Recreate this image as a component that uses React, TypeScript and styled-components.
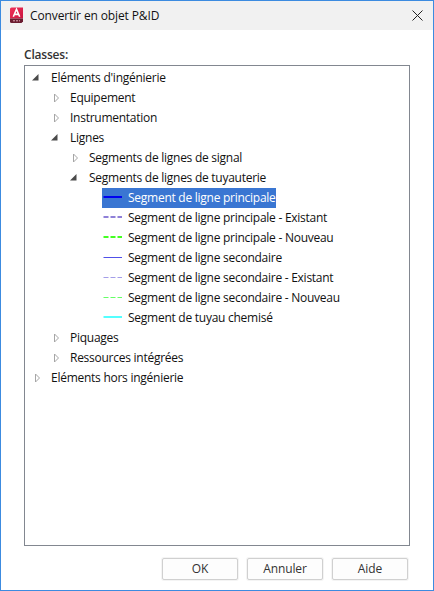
import React from 'react';
import styled, { createGlobalStyle } from 'styled-components';

const GlobalStyle = createGlobalStyle`
  html, body {
    margin: 0;
    padding: 0;
    background: #fff;
  }
  * {
    box-sizing: border-box;
  }
`;

const Window = styled.div`
  width: 434px;
  height: 591px;
  display: flex;
  flex-direction: column;
  border: solid 1px #3c8be0;
  background: #fff;
  font-family: 'Open Sans', 'Noto Sans', sans-serif;
  font-size: 12px;
  color: #111;
  overflow: hidden;
`;

const TitleBar = styled.div`
  height: 29px;
  flex: none;
  display: flex;
  align-items: center;
  padding: 0 10px 0 8px;
  background: #f1f1f1;
`;

const TitleText = styled.span`
  margin-left: 6px;
  flex: 1;
  letter-spacing: -0.12px;
`;

const Body = styled.div`
  flex: 1;
  display: flex;
  flex-direction: column;
  padding: 17px 23px 0;
`;

const Label = styled.div`
  height: 18px;
  line-height: 16px;
  font-weight: 600;
  letter-spacing: -0.2px;
  color: #333;
`;

const TreeBox = styled.div`
  width: 386px;
  height: 481px;
  border: solid 1px #828790;
  padding: 2px 0 0;
`;

const List = styled.ul`
  list-style: none;
  margin: 0;
  padding: 0;
`;

const Row = styled.li<{ $indent: number }>`
  height: 20px;
  display: flex;
  align-items: center;
  padding-left: ${(props) => props.$indent}px;
`;

const ArrowSlot = styled.span`
  width: 20px;
  flex: none;
  display: flex;
  align-items: center;
`;

const RowText = styled.span<{ $selected?: boolean }>`
  height: 20px;
  line-height: 19px;
  white-space: nowrap;
  letter-spacing: -0.26px;
  ${(props) =>
    props.$selected &&
    `
    color: #fff;
    background: #3a76d2;
  `}
`;

const LeafLine = styled.span<{ $selected?: boolean }>`
  display: flex;
  align-items: center;
  height: 20px;
  margin-left: -1px;
  padding-left: 1px;
  background: ${(props) => (props.$selected ? '#3a76d2' : 'transparent')};
`;

const Swatch = styled.svg`
  width: 24px;
  height: 20px;
  flex: none;
  margin-right: 1px;
`;

const Footer = styled.div`
  display: flex;
  justify-content: flex-end;
  gap: 9px;
  padding: 12px 2px 0 0;
`;

const Button = styled.button`
  width: 76px;
  height: 22px;
  padding: 0 0 2px;
  border: solid 1px #d0d0d0;
  border-radius: 2px;
  background: #fdfdfd;
  box-shadow: 0 0 0 1px #f4f4f4;
  font: inherit;
  color: #333;
  letter-spacing: -0.1px;
`;

const AppIcon = () => (
  <svg width="15" height="17" viewBox="0 0 15 17">
    <defs>
      <linearGradient id="appIconFill" x1="0" y1="0" x2="1" y2="1">
        <stop offset="0" stopColor="#f0325a" />
        <stop offset="1" stopColor="#c9143f" />
      </linearGradient>
    </defs>
    <path d="M2.5 0.5 H14 V11.5 H1 V2 Q1 0.5 2.5 0.5 Z" fill="url(#appIconFill)" />
    <path d="M1 11.5 H14 V14.5 L12.5 16 H2.5 Q1 16 1 14.5 Z" fill="#6a1c30" />
    <path d="M4.3 9.8 L7.5 2.3 L10.7 9.8 M5.6 7.4 H9.4" fill="none" stroke="#fff" strokeWidth="1.6" />
    <path d="M4 13.8 H11" stroke="#e0a8b4" strokeWidth="1" strokeDasharray="2 1" />
  </svg>
);

const CloseIcon = () => (
  <svg width="11" height="11" viewBox="0 0 11 11">
    <path d="M0.5 0.5 L10.5 10.5 M10.5 0.5 L0.5 10.5" stroke="#222" strokeWidth="1" fill="none" />
  </svg>
);

const Arrow = ({ open }: { open: boolean }) =>
  open ? (
    <svg width="8" height="8" viewBox="0 0 8 8">
      <path d="M7.5 0 V6.5 H1 Z" fill="#4a4a4a" />
    </svg>
  ) : (
    <svg width="10" height="10" viewBox="0 0 10 10">
      <path d="M4.5 1 L8.5 5 L4.5 9 Z" fill="#fff" stroke="#a6a6a6" strokeWidth="1" />
    </svg>
  );

type Node = {
  label: string;
  indent: number;
  open?: boolean;
};

type Leaf = {
  label: string;
  color: string;
  weight: number;
  dash?: string;
  selected?: boolean;
};

const topNodes: Node[] = [
  { label: "Eléments d'ingénierie", indent: 6, open: true },
  { label: 'Equipement', indent: 25 },
  { label: 'Instrumentation', indent: 25 },
  { label: 'Lignes', indent: 25, open: true },
  { label: 'Segments de lignes de signal', indent: 44 },
  { label: 'Segments de lignes de tuyauterie', indent: 44, open: true },
];

const leaves: Leaf[] = [
  { label: 'Segment de ligne principale', color: '#0000f0', weight: 2, selected: true },
  { label: 'Segment de ligne principale - Existant', color: '#8f80d8', weight: 2, dash: '5 2' },
  { label: 'Segment de ligne principale - Nouveau', color: '#44ff22', weight: 2, dash: '5 2' },
  { label: 'Segment de ligne secondaire', color: '#5050e8', weight: 1 },
  { label: 'Segment de ligne secondaire - Existant', color: '#a49ee8', weight: 1, dash: '5 2' },
  { label: 'Segment de ligne secondaire - Nouveau', color: '#66ff66', weight: 1, dash: '5 2' },
  { label: 'Segment de tuyau chemisé', color: '#55ffff', weight: 2 },
];

const bottomNodes: Node[] = [
  { label: 'Piquages', indent: 25 },
  { label: 'Ressources intégrées', indent: 25 },
  { label: 'Eléments hors ingénierie', indent: 6 },
];

const renderNode = (node: Node) => (
  <Row key={node.label} $indent={node.indent}>
    <ArrowSlot>
      <Arrow open={!!node.open} />
    </ArrowSlot>
    <RowText>{node.label}</RowText>
  </Row>
);

export default function App() {
  return (
    <Window>
      <GlobalStyle />
      <TitleBar>
        <AppIcon />
        <TitleText>Convertir en objet P&amp;ID</TitleText>
        <CloseIcon />
      </TitleBar>
      <Body>
        <Label>Classes:</Label>
        <TreeBox>
          <List>
            {topNodes.map(renderNode)}
            {leaves.map((leaf) => (
              <Row key={leaf.label} $indent={78}>
                <LeafLine $selected={leaf.selected}>
                  <Swatch viewBox="0 0 24 20">
                    <line
                      x1="0.5"
                      x2="19"
                      y1={leaf.weight === 1 ? 9.5 : 9}
                      y2={leaf.weight === 1 ? 9.5 : 9}
                      stroke={leaf.color}
                      strokeWidth={leaf.weight}
                      strokeDasharray={leaf.dash}
                    />
                  </Swatch>
                  <RowText $selected={leaf.selected}>{leaf.label}</RowText>
                </LeafLine>
              </Row>
            ))}
            {bottomNodes.map(renderNode)}
          </List>
        </TreeBox>
        <Footer>
          <Button>OK</Button>
          <Button>Annuler</Button>
          <Button>Aide</Button>
        </Footer>
      </Body>
    </Window>
  );
}
